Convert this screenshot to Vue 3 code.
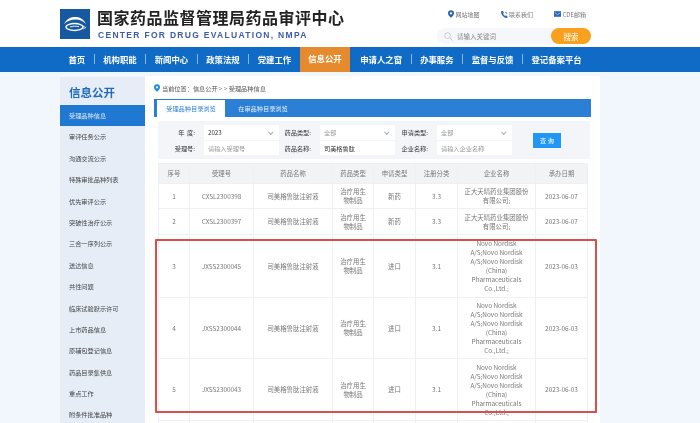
<template>
  <div class="page">
    <header class="top">
      <div class="brand">
        <svg class="logo" viewBox="0 0 30 30" width="30" height="30">
          <rect width="30" height="30" fill="#17599f" />
          <path d="M4 15C7 9 12 7.500 17 8c4 .5 7 3 9 7-3-3-6-4.500-10-4.500-5 0-9 1.500-12 4.500z" fill="#fff" />
          <ellipse cx="14.500" cy="18" rx="8.500" ry="3.400" stroke="#fff" stroke-width="1.500" fill="none" />
          <path d="M10 18c2-1 7-1 9-.3" stroke="#fff" stroke-width=".9" fill="none" />
          <path d="M23 17l3 1.500-3 1.500" stroke="#fff" stroke-width=".7" fill="none" />
        </svg>
        <div>
          <div class="cn">国家药品监督管理局药品审评中心</div>
          <div class="en">CENTER FOR DRUG EVALUATION, NMPA</div>
        </div>
      </div>
      <div class="tools">
        <div class="links">
          <a>
            <svg viewBox="0 0 8 10" width="6" height="8"><path d="M4 0a4 4 0 0 0-4 4c0 3 4 6 4 6s4-3 4-6a4 4 0 0 0-4-4zm0 5.500a1.500 1.500 0 1 1 0-3 1.500 1.500 0 0 1 0 3z" fill="#2a66b5" /></svg>
            网站地图
          </a>
          <a>
            <svg viewBox="0 0 10 10" width="7" height="7"><path d="M1 0h2l1 3-1 1c.5 1.200 1.500 2.200 3 3l1-1 2 1.500V10C4.500 10 0 5.500 0 1zM6 1c1.700.2 2.800 1.300 3 3H8c-.2-1.100-.9-1.800-2-2z" fill="#2a66b5" /></svg>
            联系我们
          </a>
          <a>
            <svg viewBox="0 0 10 8" width="7" height="6"><rect width="10" height="8" fill="#2a66b5" /><path d="M1 2l4 3 4-3" stroke="#fff" stroke-width=".8" fill="none" /></svg>
            CDE邮箱
          </a>
        </div>
        <div class="search">
          <svg viewBox="0 0 10 10" width="9" height="9"><circle cx="4" cy="4" r="3.200" stroke="#b4b8be" stroke-width=".8" fill="none" /><path d="M6.500 6.500L9.500 9.500" stroke="#b4b8be" stroke-width=".8" /></svg>
          <span class="search-text">请输入关键词</span>
          <button class="search-btn">搜索</button>
        </div>
      </div>
    </header>

    <nav class="nav">
      <a v-for="item in navItems" :key="item" :class="{ on: item === '信息公开' }">{{ item }}</a>
    </nav>

    <div class="body">
      <aside class="side">
        <h2>信息公开</h2>
        <a v-for="(item, i) in sideItems" :key="item" :class="{ on: i === 0 }">{{ item }}</a>
      </aside>

      <main class="panel">
        <div class="crumb">
          <svg viewBox="0 0 8 10" width="6" height="8"><path d="M4 0a4 4 0 0 0-4 4c0 3 4 6 4 6s4-3 4-6a4 4 0 0 0-4-4zm0 5.500a1.500 1.500 0 1 1 0-3 1.500 1.500 0 0 1 0 3z" fill="#1f8ee0" /></svg>
          当前位置：信息公开 &gt; &gt; 受理品种信息
        </div>
        <div class="tabs">
          <a class="on">受理品种目录浏览</a>
          <a>在审品种目录浏览</a>
        </div>

        <div class="filter">
          <label>年&nbsp;&nbsp;度:</label>
          <div class="field">2023<i class="caret"></i></div>
          <label>药品类型:</label>
          <div class="field muted">全部<i class="caret"></i></div>
          <label>申请类型:</label>
          <div class="field muted">全部<i class="caret"></i></div>
          <button class="query">查 询</button>
          <label>受理号:</label>
          <div class="field muted">请输入受理号</div>
          <label>药品名称:</label>
          <div class="field">司美格鲁肽</div>
          <label>企业名称:</label>
          <div class="field muted">请输入企业名称</div>
        </div>

        <table class="grid">
          <colgroup>
            <col v-for="w in colWidths" :key="w.key" :style="{ width: w.value + 'px' }" />
          </colgroup>
          <thead>
            <tr>
              <th v-for="h in heads" :key="h">{{ h }}</th>
            </tr>
          </thead>
          <tbody>
            <tr v-for="row in rows" :key="row.no" :style="{ height: row.height + 'px' }">
              <td>{{ row.no }}</td>
              <td>{{ row.code }}</td>
              <td>{{ row.name }}</td>
              <td class="pad">{{ row.no ? '治疗用生物制品' : '' }}</td>
              <td>{{ row.kind }}</td>
              <td>{{ row.cls }}</td>
              <td class="wide">{{ row.company }}</td>
              <td>{{ row.date }}</td>
            </tr>
          </tbody>
        </table>
        <div class="mark"></div>
      </main>
    </div>
  </div>
</template>

<script setup>
const navItems = ['首页', '机构职能', '新闻中心', '政策法规', '党建工作', '信息公开', '申请人之窗', '办事服务', '监督与反馈', '登记备案平台']

const sideItems = ['受理品种信息', '审评任务公示', '沟通交流公示', '特殊审批品种列表', '优先审评公示', '突破性治疗公示', '三合一序列公示', '送达信息', '共性问题', '临床试验默示许可', '上市药品信息', '原辅包登记信息', '药品目录集供息', '重点工作', '附条件批准品种']

const heads = ['序号', '受理号', '药品名称', '药品类型', '申请类型', '注册分类', '企业名称', '承办日期']

const colWidths = [31, 64, 79, 41, 42, 42, 78, 52].map((value, key) => ({ key, value }))

const zhengda = '正大天晴药业集团股份有限公司;'
const novo = 'Novo Nordisk A/S;Novo Nordisk A/S;Novo Nordisk (China) Pharmaceuticals Co.,Ltd.;'
const drug = '司美格鲁肽注射液'

const rows = [
  { no: 1, code: 'CXSL2300398', name: drug, kind: '新药', cls: '3.3', company: zhengda, date: '2023-06-07', height: 25 },
  { no: 2, code: 'CXSL2300397', name: drug, kind: '新药', cls: '3.3', company: zhengda, date: '2023-06-07', height: 26 },
  { no: 3, code: 'JXSS2300045', name: drug, kind: '进口', cls: '3.1', company: novo, date: '2023-06-03', height: 63 },
  { no: 4, code: 'JXSS2300044', name: drug, kind: '进口', cls: '3.1', company: novo, date: '2023-06-03', height: 61 },
  { no: 5, code: 'JXSS2300043', name: drug, kind: '进口', cls: '3.1', company: novo, date: '2023-06-03', height: 62 },
  { no: '', code: '', name: '', kind: '', cls: '', company: '', date: '', height: 30 }
]
</script>

<style>
html, body {
  margin: 0;
  overflow: hidden;
}
</style>

<style scoped>
.page {
  width: 700px;
  height: 423px;
  overflow: hidden;
  background: #f2f6fd;
  font-family: "Noto Sans CJK SC", "Noto Sans", sans-serif;
  filter: blur(0.4px);
}

.top {
  height: 47px;
  background: #fff;
  display: flex;
  justify-content: space-between;
  box-sizing: border-box;
  padding: 0 109px 0 60px;
}

.brand {
  display: flex;
  align-items: flex-start;
  gap: 7px;
  padding-top: 9px;
}

.logo {
  display: block;
}

.cn {
  font-size: 16px;
  line-height: 16px;
  font-weight: 700;
  letter-spacing: 0.5px;
  color: #222;
}

.en {
  margin-top: 5px;
  font-family: "Liberation Sans", sans-serif;
  font-size: 8.5px;
  line-height: 10px;
  font-weight: 700;
  letter-spacing: 1.3px;
  color: #3d5bb0;
  margin-left: 1px;
}

.tools {
  width: 154px;
  display: flex;
  flex-direction: column;
}

.links {
  display: flex;
  justify-content: flex-start;
  gap: 21px;
  padding: 9px 0 0 11px;
  height: 19px;
  box-sizing: border-box;
  font-size: 6px;
  line-height: 9px;
  color: #777;
}

.links a {
  display: flex;
  align-items: center;
  gap: 1.500px;
}

.search {
  margin-top: 9px;
  height: 16px;
  border-radius: 8px;
  background: #f5f7fb;
  display: flex;
  align-items: center;
  padding-left: 7px;
  font-size: 6.500px;
  color: #888;
}

.search-text {
  margin-left: 4px;
  flex: 1;
  line-height: 14px;
  margin-bottom: 1px;
}

.search-btn {
  width: 40px;
  height: 16px;
  padding: 0;
  border: none;
  border-radius: 8px;
  background: #f9a11f;
  color: #fff;
  font: inherit;
  font-size: 7.500px;
}

.nav {
  height: 25px;
  background: #0f6bc6;
  display: flex;
  align-items: center;
  padding-left: 60px;
  font-size: 8.400px;
  font-weight: 700;
  color: #fff;
}

.nav a {
  padding: 0 8.500px;
  margin-bottom: 2px;
  line-height: 10px;
  border-left: 1px solid rgba(255, 255, 255, 0.5);
}

.nav a:first-child,
.nav a.on,
.nav a.on + a {
  border-left: none;
}

.nav a.on {
  align-self: stretch;
  margin-bottom: 0;
  line-height: 23px;
  background: #e58a2d;
}

.nav a.on + a {
  padding-left: 10px;
}

.body {
  display: flex;
  padding: 4px 0 0 60px;
}

.side {
  width: 85px;
  margin-top: 1px;
  background: #e6edf6;
  height: 346px;
  flex-shrink: 0;
}

.side h2 {
  margin: 0;
  height: 28px;
  padding-left: 9px;
  font-size: 11.500px;
  line-height: 30px;
  font-weight: 700;
  color: #1f6cbd;
}

.side a {
  display: block;
  height: 21.400px;
  line-height: 21.400px;
  padding-left: 9px;
  font-size: 6.200px;
  color: #444;
}

.side a.on {
  background: #1f78d1;
  color: #dfeaf6;
}

.panel {
  position: relative;
  width: 455px;
  height: 400px;
  box-sizing: border-box;
  padding: 0 9px;
  background: #fff;
}

.crumb {
  height: 23px;
  display: flex;
  align-items: center;
  gap: 2px;
  padding-top: 1px;
  box-sizing: border-box;
  font-size: 6.200px;
  color: #555;
}

.tabs {
  height: 18px;
  background: #2b7fd5;
  display: flex;
  align-items: flex-end;
  padding-left: 3px;
  font-size: 6.200px;
  color: #e4effa;
}

.tabs a {
  height: 17px;
  line-height: 17px;
  width: 68px;
  text-align: center;
  margin-right: 4px;
}

.tabs a.on {
  background: #fff;
  color: #2b7fd5;
}

.filter {
  margin: 4px 1px 0 4px;
  padding: 4px 0;
  background: #f3f5f8;
  height: 38px;
  box-sizing: border-box;
  display: grid;
  grid-template-columns: 46px 75px 41px 75px 42px 75px 1fr;
  grid-template-rows: 15px 14px;
  row-gap: 1px;
  font-size: 6.200px;
  color: #333;
}

.filter label {
  padding-right: 9px;
  text-align: right;
  line-height: 15px;
  white-space: nowrap;
}

.field {
  background: #fff;
  padding: 0 4px;
  display: flex;
  align-items: center;
  justify-content: space-between;
  color: #333;
}

.muted {
  color: #999;
}

.caret {
  width: 2.500px;
  height: 2.500px;
  margin: 0 3px 1px 0;
  border-right: 1px solid #aaa;
  border-bottom: 1px solid #aaa;
  transform: rotate(45deg);
}

.query {
  grid-column: 7;
  grid-row: 1 / 3;
  align-self: center;
  justify-self: start;
  margin-left: 21px;
  width: 28px;
  height: 15px;
  padding: 0;
  border: none;
  background: #2196f3;
  color: #fff;
  font: inherit;
}

.grid {
  margin: 4px 0 0 4px;
  width: 429px;
  table-layout: fixed;
  border-collapse: collapse;
  font-size: 6.400px;
  line-height: 9px;
  color: #777;
  text-align: center;
}

.grid th,
.grid td {
  padding: 0;
  border: 1px solid #eef0f2;
  font-weight: 400;
}

.grid th {
  height: 19px;
  background: #f2f3f4;
}

.grid td.pad {
  padding: 0 7px;
}

.grid td.wide {
  padding: 0 6px;
}

.mark {
  position: absolute;
  left: 10px;
  top: 163px;
  width: 438px;
  height: 170px;
  border: 2px solid #d9504a;
  border-radius: 1px;
}
</style>
